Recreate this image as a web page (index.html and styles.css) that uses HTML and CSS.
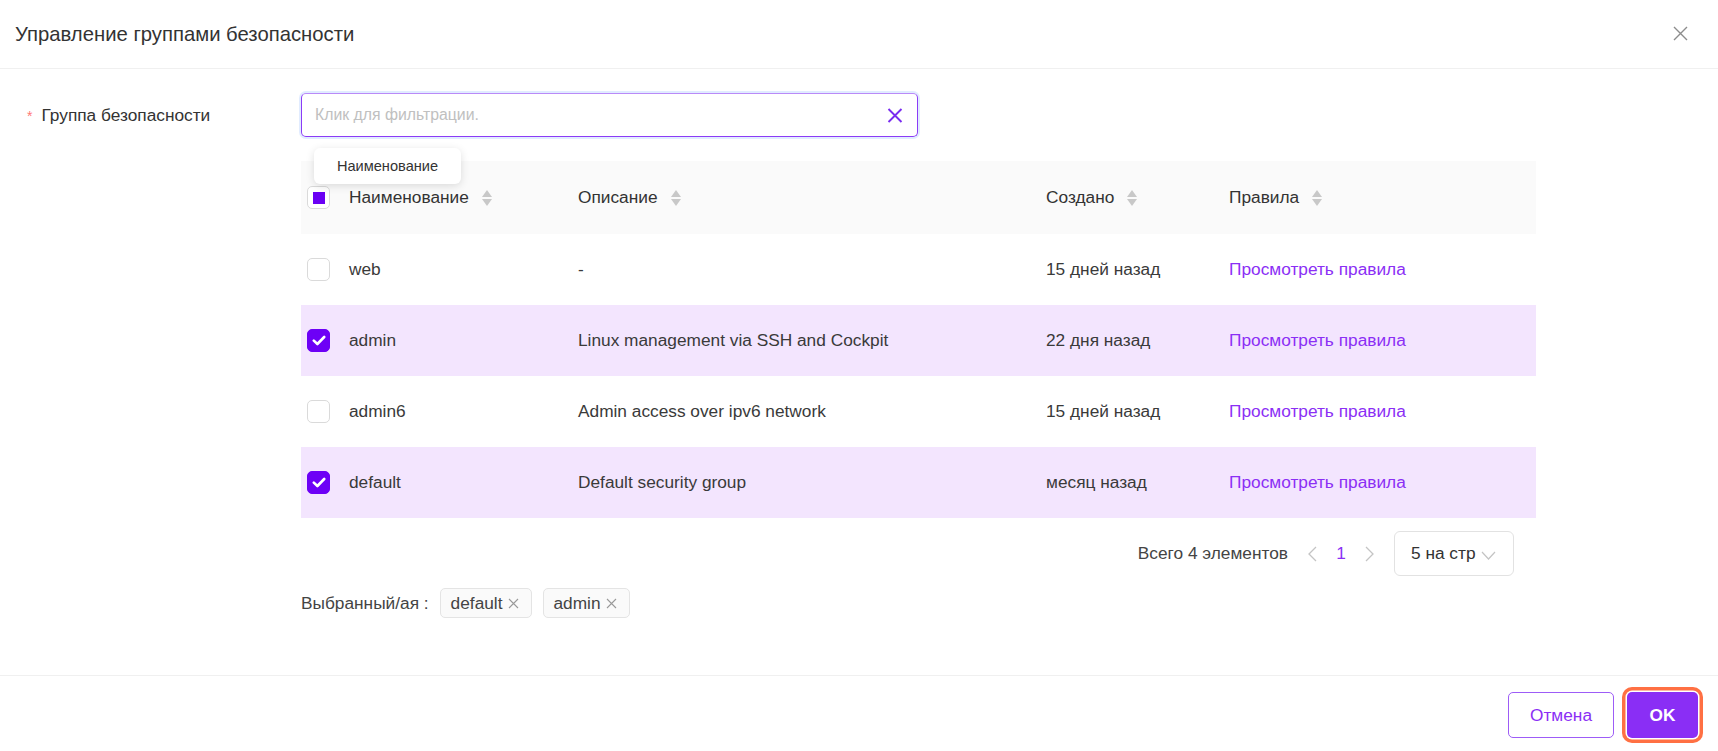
FILE: index.html
```html
<!DOCTYPE html>
<html lang="ru">
<head>
<meta charset="utf-8">
<title>Управление группами безопасности</title>
<link rel="stylesheet" href="styles.css">
</head>
<body>
<div class="modal">
  <header class="modal-header">
    <h1 class="modal-title">Управление группами безопасности</h1>
    <button class="modal-close" aria-label="Закрыть">
      <svg width="15" height="15" viewBox="0 0 15 15"><path d="M1 1L14 14M14 1L1 14" stroke="#8c8c8c" stroke-width="1.4" fill="none"/></svg>
    </button>
  </header>

  <div class="modal-body">
    <div class="form-row">
      <div class="form-label"><span class="req">*</span>Группа безопасности</div>
      <div class="form-control">
        <div class="search">
          <span class="placeholder">Клик для фильтрации.</span>
          <svg class="search-clear" width="16" height="15" viewBox="0 0 16 15"><path d="M1.5 1L14.5 14M14.5 1L1.5 14" stroke="#7a2cf0" stroke-width="1.9" fill="none"/></svg>
        </div>
        <div class="tooltip">Наименование</div>

        <table class="table">
          <colgroup>
            <col class="c-sel"><col class="c-name"><col class="c-desc"><col class="c-date"><col class="c-rules">
          </colgroup>
          <thead>
            <tr>
              <th class="sel"><span class="cb cb-ind"><span class="cb-ind-mark"></span></span></th>
              <th><span class="th-in">Наименование<span class="sort"><i class="up"></i><i class="down"></i></span></span></th>
              <th><span class="th-in">Описание<span class="sort"><i class="up"></i><i class="down"></i></span></span></th>
              <th><span class="th-in">Создано<span class="sort"><i class="up"></i><i class="down"></i></span></span></th>
              <th><span class="th-in">Правила<span class="sort"><i class="up"></i><i class="down"></i></span></span></th>
            </tr>
          </thead>
          <tbody>
            <tr>
              <td class="sel"><span class="cb"></span></td>
              <td>web</td>
              <td>-</td>
              <td>15 дней назад</td>
              <td><a class="link">Просмотреть правила</a></td>
            </tr>
            <tr class="checked">
              <td class="sel"><span class="cb cb-on"><svg width="14" height="11" viewBox="0 0 14 11"><path d="M1.8 5.6L5.4 9L12.2 2" stroke="#fff" stroke-width="2.6" fill="none" stroke-linecap="round" stroke-linejoin="round"/></svg></span></td>
              <td>admin</td>
              <td>Linux management via SSH and Cockpit</td>
              <td>22 дня назад</td>
              <td><a class="link">Просмотреть правила</a></td>
            </tr>
            <tr>
              <td class="sel"><span class="cb"></span></td>
              <td>admin6</td>
              <td>Admin access over ipv6 network</td>
              <td>15 дней назад</td>
              <td><a class="link">Просмотреть правила</a></td>
            </tr>
            <tr class="checked">
              <td class="sel"><span class="cb cb-on"><svg width="14" height="11" viewBox="0 0 14 11"><path d="M1.8 5.6L5.4 9L12.2 2" stroke="#fff" stroke-width="2.6" fill="none" stroke-linecap="round" stroke-linejoin="round"/></svg></span></td>
              <td>default</td>
              <td>Default security group</td>
              <td>месяц назад</td>
              <td><a class="link">Просмотреть правила</a></td>
            </tr>
          </tbody>
        </table>

        <div class="pagination">
          <span class="total">Всего 4 элементов</span>
          <span class="pg-btn"><svg width="12" height="16" viewBox="0 0 12 16"><path d="M10 1L3 8L10 15" stroke="#c4c4c4" stroke-width="1.3" fill="none"/></svg></span>
          <span class="pg-page">1</span>
          <span class="pg-btn"><svg width="12" height="16" viewBox="0 0 12 16"><path d="M2 1L9 8L2 15" stroke="#c4c4c4" stroke-width="1.3" fill="none"/></svg></span>
          <span class="pg-size">5 на стр<svg class="chev" width="15" height="9" viewBox="0 0 15 9"><path d="M1 1L7.5 8L14 1" stroke="#c4c4c4" stroke-width="1.2" fill="none"/></svg></span>
        </div>

        <div class="selected">
          <span class="selected-label">Выбранный/ая :</span>
          <span class="tag">default<svg width="11" height="11" viewBox="0 0 11 11"><path d="M1 1L10 10M10 1L1 10" stroke="#9a9a9a" stroke-width="1.1" fill="none"/></svg></span>
          <span class="tag">admin<svg width="11" height="11" viewBox="0 0 11 11"><path d="M1 1L10 10M10 1L1 10" stroke="#9a9a9a" stroke-width="1.1" fill="none"/></svg></span>
        </div>
      </div>
    </div>
  </div>

  <footer class="modal-footer">
    <button class="btn btn-cancel">Отмена</button>
    <button class="btn btn-ok">OK</button>
  </footer>
</div>
</body>
</html>
```

FILE: styles.css
```css
* { box-sizing: border-box; }

html, body {
  margin: 0;
  padding: 0;
  background: #fff;
}

body {
  font-family: "Liberation Sans", Arial, sans-serif;
  color: #3a3a3a;
  font-size: 17.3px;
}

.modal {
  width: 1718px;
  height: 751px;
  display: flex;
  flex-direction: column;
}

.modal-header {
  height: 69px;
  flex: none;
  display: flex;
  align-items: center;
  justify-content: space-between;
  padding: 0 30px 1px 15px;
  border-bottom: 1px solid #f0f0f0;
}

.modal-title {
  margin: 0;
  font-size: 20.3px;
  font-weight: normal;
  color: #333;
  line-height: 24px;
}

.modal-close {
  border: 0;
  background: transparent;
  padding: 0;
  width: 15px;
  height: 15px;
  display: flex;
}

.modal-body {
  flex: 1;
  padding-top: 24px;
}

.form-row {
  display: flex;
}

.form-label {
  width: 301px;
  flex: none;
  padding-left: 27px;
  line-height: 44px;
  height: 44px;
  font-size: 17.3px;
  color: #333;
}

.req {
  color: #ff7875;
  margin-right: 9px;
  font-size: 14px;
}

.form-control {
  position: relative;
  width: 1235px;
}

.search {
  width: 617px;
  height: 44px;
  border: 1px solid #8b3cf6;
  border-top-color: #b98af8;
  border-radius: 5px;
  box-shadow: 0 0 0 2px rgba(170, 200, 255, 0.35);
  display: flex;
  align-items: center;
  justify-content: space-between;
  padding: 0 14px 0 13px;
}

.placeholder {
  color: #c0c0c0;
  font-size: 15.8px;
}

.tooltip {
  position: absolute;
  left: 13px;
  top: 55px;
  width: 147px;
  height: 36px;
  background: #fff;
  border-radius: 6px;
  box-shadow: 0 2px 9px rgba(0, 0, 0, 0.13);
  font-size: 14.6px;
  color: #333;
  display: flex;
  align-items: center;
  justify-content: center;
  z-index: 2;
}

.table {
  margin-top: 24px;
  width: 1235px;
  border-collapse: collapse;
  table-layout: fixed;
}

.c-sel { width: 36px; }
.c-name { width: 229px; }
.c-desc { width: 468px; }
.c-date { width: 183px; }
.c-rules { width: 319px; }

.table th {
  background: #fafafa;
  height: 73px;
  font-weight: normal;
  text-align: left;
  padding: 0 12px;
  color: #333;
  font-size: 17.3px;
}

.table td {
  height: 71px;
  padding: 0 12px;
  font-size: 17.3px;
  color: #3a3a3a;
  white-space: nowrap;
}

.table th.sel, .table td.sel {
  padding: 0 0 0 6px;
}

.table tr.checked td {
  background: #f3e5fe;
}

.th-in {
  display: inline-flex;
  align-items: center;
}

.sort {
  display: inline-flex;
  flex-direction: column;
  gap: 2px;
  margin-left: 13px;
}

.sort i {
  display: block;
  width: 0;
  height: 0;
  border-left: 5.5px solid transparent;
  border-right: 5.5px solid transparent;
}

.sort .up { border-bottom: 7px solid #c8c8c8; }
.sort .down { border-top: 7px solid #c8c8c8; }

.cb {
  width: 23px;
  height: 23px;
  border: 1px solid #dadada;
  border-radius: 5px;
  background: #fff;
  display: flex;
  align-items: center;
  justify-content: center;
}

.cb-ind-mark {
  width: 12px;
  height: 12px;
  background: #6a00f4;
}

.cb-on {
  background: #6d00f6;
  border-color: #6d00f6;
}

.link {
  color: #8b2ff5;
  text-decoration: none;
}

.pagination {
  margin-top: 13px;
  padding-right: 22px;
  display: flex;
  justify-content: flex-end;
  align-items: center;
}

.total {
  margin-right: 8px;
  color: #444;
}

.pg-btn {
  width: 32px;
  height: 32px;
  display: flex;
  align-items: center;
  justify-content: center;
}

.pg-page {
  width: 26px;
  text-align: center;
  color: #8b2ff5;
}

.pg-size {
  margin-left: 8px;
  width: 120px;
  height: 45px;
  border: 1px solid #e2e2e2;
  border-radius: 6px;
  display: flex;
  align-items: center;
  padding: 0 0 0 16px;
  color: #333;
}

.chev {
  margin-left: 5px;
  margin-top: 3px;
}

.selected {
  margin-top: 12px;
  display: flex;
  align-items: center;
  gap: 11px;
}

.selected-label {
  color: #444;
  margin-right: 0;
}

.tag {
  height: 30px;
  display: inline-flex;
  align-items: center;
  gap: 5px;
  padding: 0 12px 0 10px;
  background: #fafafa;
  border: 1px solid #e4e4e4;
  border-radius: 5px;
  color: #444;
}

.modal-footer {
  flex: none;
  height: 76px;
  border-top: 1px solid #f0f0f0;
  display: flex;
  justify-content: flex-end;
  align-items: flex-start;
  padding: 16px 20px 0 0;
  gap: 13px;
}

.btn {
  font-family: "Liberation Sans", Arial, sans-serif;
  font-size: 17.3px;
  height: 46px;
  border-radius: 5px;
  cursor: pointer;
}

.btn-cancel {
  width: 106px;
  background: #fff;
  color: #8b2ff5;
  border: 1px solid #9d5cf7;
}

.btn-ok {
  width: 71px;
  background: #8a2ef5;
  color: #fff;
  border: 0;
  font-weight: bold;
  box-shadow: 0 0 0 1.5px #fff, 0 0 0 5px #ff7043;
}
```
